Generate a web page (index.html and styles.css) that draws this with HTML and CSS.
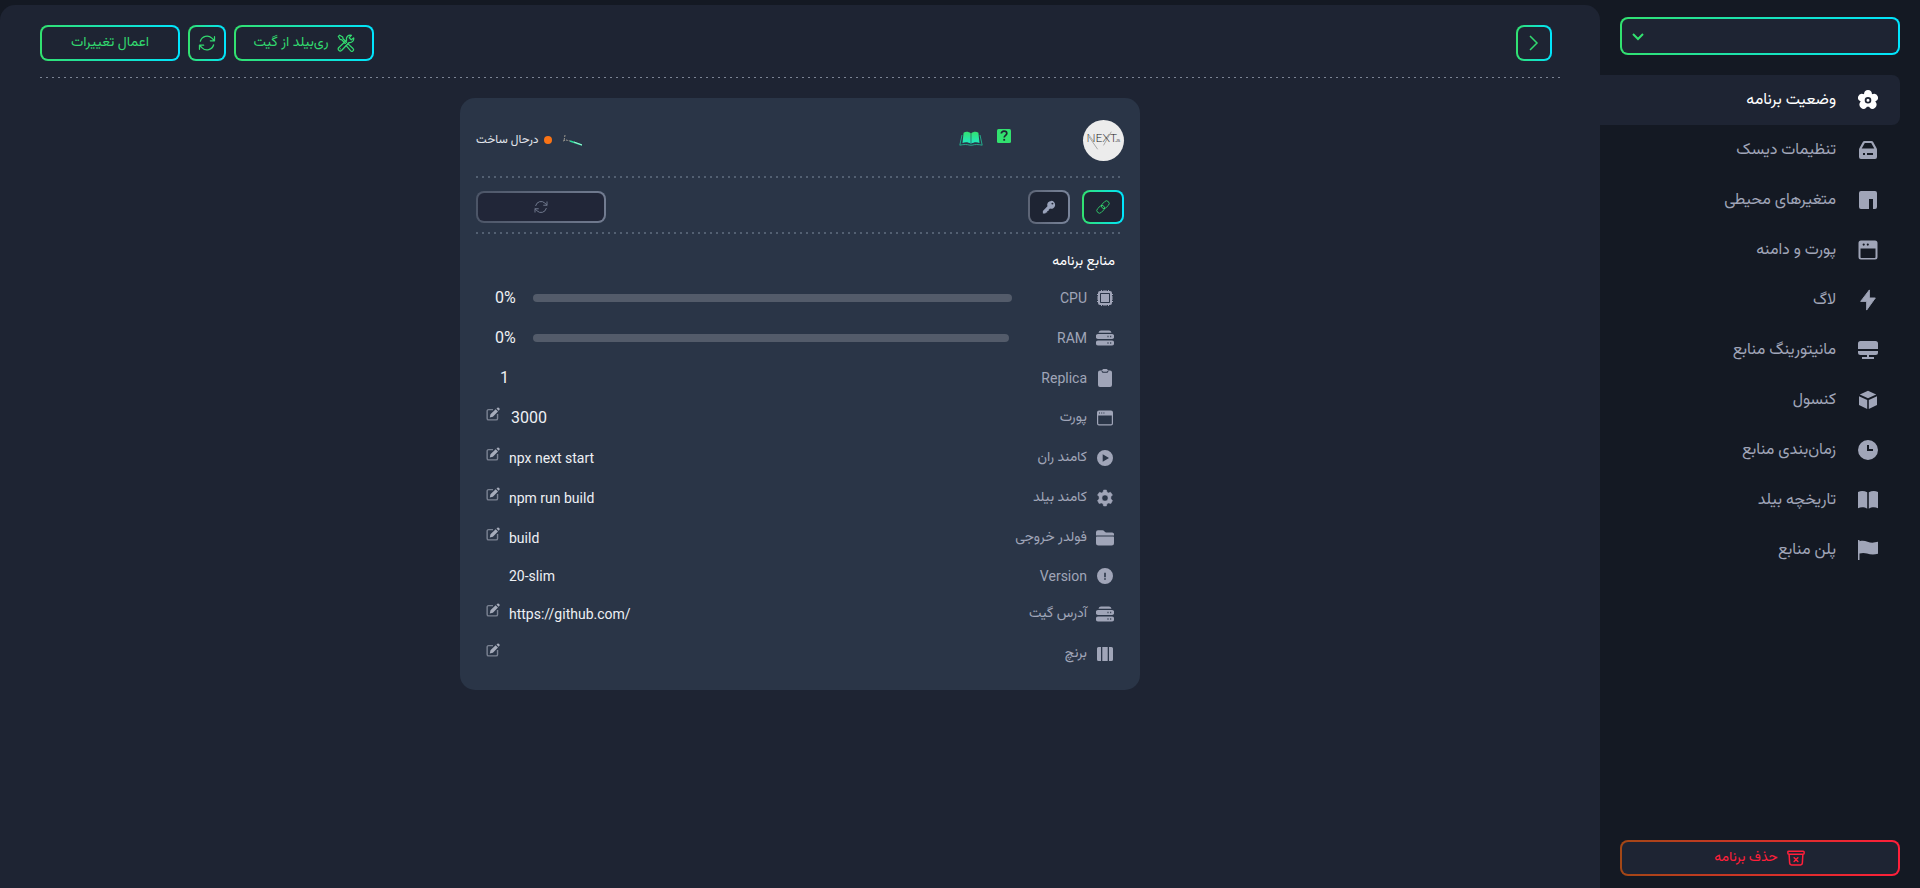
FILE: index.html
```html
<!DOCTYPE html>
<html lang="fa" dir="rtl">
<head>
<meta charset="utf-8">
<meta name="viewport" content="width=device-width, initial-scale=1">
<title>وضعیت برنامه</title>
<link rel="stylesheet" href="styles.css">
</head>
<body>
<svg class="sprite" aria-hidden="true">
  <symbol id="i-flower" viewBox="0 0 20 20"><path fill-rule="evenodd" d="M10 0a3.900 3.900 0 0 1 3.900 3.500l.1.800.8-.2a3.800 3.800 0 0 1 4.900 2.200 3.900 3.900 0 0 1-1.700 4.800l-.8.400.5.600a3.900 3.900 0 0 1-.6 5.600 3.900 3.900 0 0 1-5.500-.3l-.5-.7H8.900l-.5.700a3.900 3.900 0 0 1-5.500.3 3.900 3.900 0 0 1-.6-5.600l.5-.6-.8-.400A3.900 3.900 0 0 1 .3 6.300 3.800 3.800 0 0 1 5.200 4.100l.8.200.1-.8A3.900 3.900 0 0 1 10 0zm0 6.900a3.300 3.300 0 1 0 0 6.600 3.300 3.300 0 0 0 0-6.600zm0 1.800a1.500 1.500 0 1 1 0 3 1.500 1.500 0 0 1 0-3z"/></symbol>
  <symbol id="i-disk" viewBox="0 0 20 20"><path fill-rule="evenodd" d="M6.500 1h7a2 2 0 0 1 1.700 1l3.300 6c.4.700.5 1.200.5 2v7a2 2 0 0 1-2 2H3a2 2 0 0 1-2-2v-7c0-.8.1-1.300.5-2l3.300-6a2 2 0 0 1 1.700-1zm.3 2L3.700 8.600h12.600L13.200 3zM5 13v2h2v-2zm4 0v2h6v-2z"/></symbol>
  <symbol id="i-npm" viewBox="0 0 20 20"><path d="M3 1h14a2 2 0 0 1 2 2v14a2 2 0 0 1-2 2h-2V9h-4v10H3a2 2 0 0 1-2-2V3a2 2 0 0 1 2-2z"/></symbol>
  <symbol id="i-window" viewBox="0 0 20 20"><path fill-rule="evenodd" d="M3 .5h14a2.500 2.500 0 0 1 2.500 2.500v14a2.500 2.500 0 0 1-2.500 2.500H3A2.500 2.500 0 0 1 .5 17V3A2.500 2.500 0 0 1 3 .5zM2.500 8.500V17c0 .6.300 1 1 1h13c.7 0 1-.4 1-1V8.500zM5.700 3.500a1.100 1.100 0 1 0 0 2.200 1.100 1.100 0 0 0 0-2.200zm4.100 0a1.100 1.100 0 1 0 0 2.200 1.100 1.100 0 0 0 0-2.200z"/></symbol>
  <symbol id="i-bolt" viewBox="0 0 20 24"><path d="M11.500 1 2 13.500h6.500V23L18 9.800h-6.500z" stroke="currentColor" stroke-linejoin="round"/></symbol>
  <symbol id="i-monitor" viewBox="0 0 20 20"><path d="M2.500 1h15A2.500 2.500 0 0 1 20 3.500V9H0V3.500A2.500 2.500 0 0 1 2.500 1zM0 11h20v1.500a2.500 2.500 0 0 1-2.500 2.500H11v2h5v2H4v-2h5v-2H2.500A2.500 2.500 0 0 1 0 12.500z"/></symbol>
  <symbol id="i-cube" viewBox="0 0 20 20"><path d="M10 .8 18.200 4.600 10 8.300 1.800 4.600zM1 6.300l8.200 3.600V19L1 15zM19 6.300l-8.200 3.600V19L19 15z"/></symbol>
  <symbol id="i-clock" viewBox="0 0 20 20"><path fill-rule="evenodd" d="M10 0a10 10 0 1 1 0 20 10 10 0 0 1 0-20zM9 5v6h6V9h-4V5z"/></symbol>
  <symbol id="i-book" viewBox="0 0 20 20"><path d="M0 2c3-1.600 6.300-1.300 9.200.3v16.400C6.500 17 3 16.800 0 18.200zM20 2c-3-1.600-6.300-1.300-9.200.3v16.400c2.700-1.700 6.200-1.900 9.200-.5z"/></symbol>
  <symbol id="i-flag" viewBox="0 0 20 20"><path d="M0 0h1.500v1.300c3-.9 5.500-.4 8 .5 3.500 1.200 6.500 1 10.500 0v12c-4 1.200-7.500 1-11-.3-2.500-.8-5-.8-7.500 0V20H0z"/></symbol>
  <symbol id="i-refresh" viewBox="0 0 24 24"><path fill="none" stroke="currentColor" stroke-width="1.500" stroke-linecap="round" stroke-linejoin="round" d="M16.023 9.348h4.992V4.356M2.985 19.644v-4.992h4.992m-4.993 0 3.181 3.183a8.250 8.250 0 0 0 13.803-3.700M4.031 9.865a8.250 8.250 0 0 1 13.803-3.700l3.181 3.182"/></symbol>
  <symbol id="i-archive" viewBox="0 0 24 24"><path fill="none" stroke="currentColor" stroke-width="1.800" stroke-linecap="round" stroke-linejoin="round" d="m20.250 7.500-.625 10.632a2.250 2.250 0 0 1-2.247 2.118H6.622a2.250 2.250 0 0 1-2.247-2.118L3.750 7.500m6 4.125 4.500 4.500m0-4.500-4.500 4.500M3.375 7.500h17.250c.621 0 1.125-.504 1.125-1.125v-1.500c0-.621-.504-1.125-1.125-1.125H3.375c-.621 0-1.125.504-1.125 1.125v1.500c0 .621.504 1.125 1.125 1.125z"/></symbol>
  <symbol id="i-tools" viewBox="0 0 20 20"><g fill="none" stroke="currentColor" stroke-width="1.400" stroke-linejoin="round" stroke-linecap="round"><path d="M1.500 2.800 3 1.300l3.300 2 .4 1.900 4 4M1.500 2.800l2 3.300 1.900.4 3.800 4M12.300 11l5.500 5.200a1.700 1.700 0 0 1-2.500 2.500L10.200 13"/><path d="m18.500 4.300-2.600 2.200-2.300-2.400L16 1.400a4.300 4.300 0 0 0-5.300 5.500l-8.900 8.300a2.300 2.300 0 0 0 3.200 3.200l8.500-8.900a4.300 4.300 0 0 0 5-5.200zM3.600 16.500h.1"/></g></symbol>
  <symbol id="i-next" viewBox="0 0 20 20"><path fill="none" stroke="currentColor" stroke-width="1.500" d="m6 3 7 7-7 7"/></symbol>
  <symbol id="i-link" viewBox="0 0 24 24"><g fill="none" stroke="currentColor" stroke-width="1.400" transform="rotate(-45 12 12)"><rect x="-1" y="7.500" width="15" height="9" rx="4.500"/><rect x="10" y="7.500" width="15" height="9" rx="4.500"/></g></symbol>
  <symbol id="i-key" viewBox="0 0 16 16"><path fill-rule="evenodd" d="M10.500 1a4.500 4.500 0 1 1-1.300 8.800L7.500 11.300V12.700H6v1.500H4.500L3.800 15.400H1V12.500l5.200-5.400A4.600 4.600 0 0 1 10.500 1zm1.400 2a1.100 1.100 0 1 0 0 2.200 1.100 1.100 0 0 0 0-2.200z"/></symbol>
  <symbol id="i-cpu" viewBox="0 0 18 18"><path fill-rule="evenodd" d="M4 2h1V1h1v1h1.500V1h1v1h1V1h1v1H12V1h1v1h1a2 2 0 0 1 2 2v1h1v1h-1v1.500h1v1h-1v1h1v1h-1V12h1v1h-1v1a2 2 0 0 1-2 2h-1v1h-1v-1h-1.500v1h-1v-1h-1v1h-1v-1H6v1H5v-1H4a2 2 0 0 1-2-2v-1H1v-1h1v-1.500H1v-1h1v-1H1v-1h1V6H1V5h1V4a2 2 0 0 1 2-2zm.700 2c-.4 0-.7.300-.7.700v8.600c0 .4.300.7.700.7h8.600c.4 0 .7-.3.700-.7V4.700c0-.4-.3-.7-.7-.7zM5 5h8v8H5z"/></symbol>
  <symbol id="i-server" viewBox="0 0 18 18"><path fill-rule="evenodd" d="M5 1.500h8c1.300 0 2 .8 2.500 2.300h-13C3 2.300 3.700 1.500 5 1.500zM2.300 5h13.400a2.300 2.300 0 0 1 0 5H2.300a2.300 2.300 0 0 1 0-5zm9.200 1.800v1.400h1V6.800zm2.700 0v1.400h1V6.800zM2.300 11.500h13.400a2.300 2.300 0 0 1 0 5H2.300a2.300 2.300 0 0 1 0-5zm9.200 1.800v1.400h1v-1.400zm2.700 0v1.400h1v-1.400z"/></symbol>
  <symbol id="i-clip" viewBox="0 0 18 18"><path fill-rule="evenodd" d="M6 1.500C6.300.5 7 0 8 0h2c1 0 1.700.5 2 1.500h2a2 2 0 0 1 2 2V16a2 2 0 0 1-2 2H4a2 2 0 0 1-2-2V3.500a2 2 0 0 1 2-2zM5.500 2c.3 1.300 1 1.800 2 1.800h3c1 0 1.700-.5 2-1.800l-.8-.2c-.2.700-.7 1-1.400 1H7.700c-.7 0-1.200-.3-1.400-1z"/></symbol>
  <symbol id="i-browser" viewBox="0 0 18 18"><path fill-rule="evenodd" d="M3 1.500h12a2 2 0 0 1 2 2v11a2 2 0 0 1-2 2H3a2 2 0 0 1-2-2v-11a2 2 0 0 1 2-2zM2.200 6.500v7.800c0 .6.400 1 1 1h11.600c.6 0 1-.4 1-1V6.500zM3 3.500v1h1v-1zm2.200 0v1h1v-1zm2.200 0v1h1v-1z"/></symbol>
  <symbol id="i-play" viewBox="0 0 18 18"><path fill-rule="evenodd" d="M9 1a8 8 0 1 1 0 16A8 8 0 0 1 9 1zM6.700 5.200v7.600L13 9z"/></symbol>
  <symbol id="i-gear" viewBox="0 0 18 18"><path fill-rule="evenodd" d="M7.600 1h2.800l.5 2 1.500.9 2.100-.7L16.500 6l-1.600 1.700v2.200l1.600 1.700-1.600 3-2.300-.6-1.600.8-.6 2.200H7.600L7 14.800l-1.600-.8-2.300.6-1.600-3L3.100 10V7.700L1.500 6l2-2.800 2.100.7L7.100 3zM9 5.900a3.100 3.100 0 1 0 0 6.200 3.100 3.100 0 0 0 0-6.200z" stroke="currentColor" stroke-width=".5" stroke-linejoin="round"/></symbol>
  <symbol id="i-folder" viewBox="0 0 18 18"><path d="M2 1.300h4.500c1.500 0 2.200 2.200 3.500 2.200h6a2 2 0 0 1 2 2.500v.5H0V3.300a2 2 0 0 1 2-2zM0 8.500c0-.6.400-1 1-1h16c.6 0 1 .4 1 1V14a2.500 2.500 0 0 1-2.500 2.500h-13A2.500 2.500 0 0 1 0 14z"/></symbol>
  <symbol id="i-alert" viewBox="0 0 18 18"><path fill-rule="evenodd" d="M9 1a8 8 0 1 1 0 16A8 8 0 0 1 9 1zm-.8 4.800v4.500h1.600V5.800zm0 5.400v1.500h1.600v-1.500z"/></symbol>
  <symbol id="i-columns" viewBox="0 0 18 18"><path d="M2.500 2H5v14H2.500A1.500 1.500 0 0 1 1 14.500v-11A1.500 1.500 0 0 1 2.500 2zM6.300 2h5.400v14H6.300zM13 2h2.500A1.500 1.500 0 0 1 17 3.500v11a1.500 1.500 0 0 1-1.500 1.500H13z"/></symbol>
  <symbol id="i-edit" viewBox="0 0 16 16"><path fill="none" stroke="currentColor" stroke-width="1.600" opacity=".65" d="M8 3H3a1.700 1.700 0 0 0-1.700 1.700v8.300A1.700 1.700 0 0 0 3 14.700h8.500a1.700 1.700 0 0 0 1.700-1.700V8"/><path d="M4.300 12.100 5.100 8.400 11 2.500 13.700 5.200 7.900 11.100zM12 1.800l1-1a1.200 1.200 0 0 1 1.600 0l.8.800a1.200 1.200 0 0 1 0 1.600l-1 1z"/></symbol>
</svg>

<div class="app">
  <aside class="sidebar">
    <div class="picker ring">
      <select class="picker-select" aria-label="انتخاب برنامه"><option label=" "></option></select>
      <svg class="picker-arrow" viewBox="0 0 12 8" aria-hidden="true"><path d="m1 1 5 5 5-5"/></svg>
    </div>
    <nav class="nav">
      <a class="nav-item active" href="#"><svg class="nav-icon"><use href="#i-flower"/></svg>وضعیت برنامه</a>
      <a class="nav-item" href="#"><svg class="nav-icon"><use href="#i-disk"/></svg>تنظیمات دیسک</a>
      <a class="nav-item" href="#"><svg class="nav-icon"><use href="#i-npm"/></svg>متغیرهای محیطی</a>
      <a class="nav-item" href="#"><svg class="nav-icon"><use href="#i-window"/></svg>پورت و دامنه</a>
      <a class="nav-item" href="#"><svg class="nav-icon"><use href="#i-bolt"/></svg>لاگ</a>
      <a class="nav-item" href="#"><svg class="nav-icon"><use href="#i-monitor"/></svg>مانیتورینگ منابع</a>
      <a class="nav-item" href="#"><svg class="nav-icon"><use href="#i-cube"/></svg>کنسول</a>
      <a class="nav-item" href="#"><svg class="nav-icon"><use href="#i-clock"/></svg>زمان‌بندی منابع</a>
      <a class="nav-item" href="#"><svg class="nav-icon"><use href="#i-book"/></svg>تاریخچه بیلد</a>
      <a class="nav-item" href="#"><svg class="nav-icon"><use href="#i-flag"/></svg>پلن منابع</a>
    </nav>
    <button class="btn ring danger" type="button"><svg class="icon-20"><use href="#i-archive"/></svg>حذف برنامه</button>
  </aside>

  <main class="main">
    <header class="toolbar">
      <button class="btn ring square" type="button" aria-label="بازگشت"><svg class="icon-20"><use href="#i-next"/></svg></button>
      <div class="toolbar-actions">
        <button class="btn ring wide" type="button"><svg class="icon-18"><use href="#i-tools"/></svg>ری‌بیلد از گیت</button>
        <button class="btn ring reload" type="button" aria-label="بارگذاری مجدد"><svg class="icon-20"><use href="#i-refresh"/></svg></button>
        <button class="btn ring wide" type="button">اعمال تغییرات</button>
      </div>
    </header>

    <section class="card">
      <div class="card-head">
        <div class="logo" dir="ltr"><span class="logo-text">NEXT</span><span class="logo-js">.JS</span>
          <svg class="logo-lines" viewBox="0 0 42 42" aria-hidden="true"><path d="m6 17 9 13M21 26l8-14"/></svg>
        </div>
        <div class="help">
          <svg class="help-q" viewBox="0 0 14 14" role="img" aria-label="راهنما"><rect width="14" height="14" rx="1.500" fill="#32e16f"/><path d="M4.300 4.600C4.300 3 5.500 2.200 7 2.200s2.800.9 2.800 2.300C9.800 6.300 7.200 6.400 7.200 8.500" fill="none" stroke="#1e2433" stroke-width="1.700"/><path d="M6.300 9.900h1.800v1.800H6.300z" fill="#1e2433"/></svg>
          <svg class="help-book" viewBox="0 0 24 16" role="img" aria-label="مستندات">
            <defs><linearGradient id="g-book" x2="0" y2="1"><stop stop-color="#32e16f"/><stop offset="1" stop-color="#22e8c5"/></linearGradient></defs>
            <path fill="url(#g-book)" d="M11.700 2.300C9.500.3 6.500.3 4.600 1.800L3.500 12c2.800-1.200 6-.9 8.200.8zM12.300 2.300c2.200-2 5.200-2 7.100-.5L20.500 12c-2.800-1.200-6-.9-8.200.8z"/>
            <path fill="none" stroke="#22c59b" stroke-width=".8" d="M3 4 .8 14.200c4-.9 7.200-.9 10.200 0h2c3-.9 6.200-.9 10.200 0L21 4"/>
          </svg>
        </div>
        <div class="status">
          <svg class="spark" viewBox="0 0 20 12" aria-hidden="true"><path d="m1 7 3-1 4 1M3 1 2 7" stroke="#9a978f" stroke-dasharray="2 1"/><path d="m8 7 12 4" stroke="#2fdc9b" stroke-width="1.500"/><path d="m12 8 8 3" stroke="#c9ffee" stroke-width=".7"/></svg>
          <span class="dot"></span>درحال ساخت
        </div>
      </div>
      <div class="card-tools">
        <button class="btn ring tool" type="button" aria-label="پیوند"><svg class="icon-14"><use href="#i-link"/></svg></button>
        <button class="btn ring tool muted" type="button" aria-label="کلید"><svg class="icon-14"><use href="#i-key"/></svg></button>
        <button class="btn ring restart muted" type="button" aria-label="راه‌اندازی مجدد"><svg class="icon-16"><use href="#i-refresh"/></svg></button>
      </div>
      <h2 class="card-title">منابع برنامه</h2>
      <div class="rows">
        <div class="row"><svg class="icon-18"><use href="#i-cpu"/></svg><span class="label">CPU</span><div class="bar" role="progressbar" aria-label="CPU" aria-valuenow="0"></div><span class="percent" dir="ltr">0%</span></div>
        <div class="row"><svg class="icon-18"><use href="#i-server"/></svg><span class="label">RAM</span><div class="bar" role="progressbar" aria-label="RAM" aria-valuenow="0"></div><span class="percent" dir="ltr">0%</span></div>
        <div class="row"><svg class="icon-18"><use href="#i-clip"/></svg><span class="label">Replica</span><span class="count">1</span></div>
        <div class="row"><svg class="icon-18"><use href="#i-browser"/></svg><span class="label">پورت</span><span class="value number" dir="ltr">3000</span><button class="edit" type="button" aria-label="ویرایش پورت"><svg class="icon-14"><use href="#i-edit"/></svg></button></div>
        <div class="row"><svg class="icon-18"><use href="#i-play"/></svg><span class="label">کامند ران</span><span class="value" dir="ltr">npx next start</span><button class="edit" type="button" aria-label="ویرایش کامند ران"><svg class="icon-14"><use href="#i-edit"/></svg></button></div>
        <div class="row"><svg class="icon-18"><use href="#i-gear"/></svg><span class="label">کامند بیلد</span><span class="value" dir="ltr">npm run build</span><button class="edit" type="button" aria-label="ویرایش کامند بیلد"><svg class="icon-14"><use href="#i-edit"/></svg></button></div>
        <div class="row"><svg class="icon-18"><use href="#i-folder"/></svg><span class="label">فولدر خروجی</span><span class="value" dir="ltr">build</span><button class="edit" type="button" aria-label="ویرایش فولدر خروجی"><svg class="icon-14"><use href="#i-edit"/></svg></button></div>
        <div class="row fixed"><svg class="icon-18"><use href="#i-alert"/></svg><span class="label">Version</span><span class="value" dir="ltr">20-slim</span></div>
        <div class="row"><svg class="icon-18"><use href="#i-server"/></svg><span class="label">آدرس گیت</span><span class="value" dir="ltr">https://github.com/</span><button class="edit" type="button" aria-label="ویرایش آدرس گیت"><svg class="icon-14"><use href="#i-edit"/></svg></button></div>
        <div class="row"><svg class="icon-18"><use href="#i-columns"/></svg><span class="label">برنچ</span><span class="value" dir="ltr"></span><button class="edit" type="button" aria-label="ویرایش برنچ"><svg class="icon-14"><use href="#i-edit"/></svg></button></div>
      </div>
    </section>
  </main>
</div>
</body>
</html>
```
FILE: styles.css
```css
:root {
  --bg: #141923;
  --panel: #1e2433;
  --card: #2a3547;
  --green: #32d96f;
  --muted: #a0a5b8;
  --from: #32e16f;
  --to: #00e5ff;
}

* { box-sizing: border-box; }

body {
  margin: 0;
  background: var(--bg);
  color: #fff;
  font-family: Roboto, Vazirmatn, "Noto Sans Arabic", sans-serif;
  font-size: 14px;
}

svg { flex: none; fill: currentColor; }
.sprite { position: absolute; width: 0; height: 0; }
.icon-14 { width: 14px; height: 14px; }
.icon-16 { width: 16px; height: 16px; }
.icon-18 { width: 18px; height: 18px; }
.icon-20 { width: 20px; height: 20px; }

.app { display: flex; min-height: 100vh; }

.sidebar {
  display: flex;
  flex-direction: column;
  width: 320px;
  padding: 17px 20px 12px;
}

/* Rounded outline with a horizontal gradient */
.ring {
  border: 2px solid transparent;
  border-radius: 8px;
  background:
    linear-gradient(var(--panel), var(--panel)) padding-box,
    linear-gradient(90deg, var(--from), var(--to)) border-box;
}

.picker { display: grid; align-items: center; height: 38px; }
.picker-select {
  grid-area: 1 / 1;
  width: 100%;
  height: 100%;
  border: 0;
  background: none;
  color: #fff;
  appearance: none;
  font: inherit;
}
.picker-arrow {
  grid-area: 1 / 1;
  justify-self: end;
  width: 12px;
  height: 8px;
  margin: 2px 0 0 10px;
  pointer-events: none;
  fill: none;
  stroke: var(--from);
  stroke-width: 2;
}

.nav { flex: 1; margin: 20px 0 0 -20px; }
.nav-item {
  display: flex;
  align-items: center;
  gap: 22px;
  height: 50px;
  padding: 0 22px;
  color: var(--muted);
  font-size: 16px;
  text-decoration: none;
}
.nav-item.active {
  background: var(--panel);
  border-radius: 0 8px 8px 0;
  color: #fff;
}
.nav-icon { width: 20px; height: 22px; }

.btn {
  display: flex;
  align-items: center;
  justify-content: center;
  gap: 8px;
  height: 36px;
  padding: 0;
  color: var(--green);
  font: inherit;
}
.danger { --from: #a34716; --to: #ff1f3a; color: #ff1f3a; }
.wide { width: 140px; }
.square { width: 36px; }
.reload { width: 38px; }
.tool { width: 42px; height: 34px; }
.muted { --from: #5c6475; --to: #7a859b; color: #9aa3bb; }
.restart { width: 130px; height: 32px; margin-right: auto; }
.restart.muted { --panel: #212638; --from: #4c5567; --to: #727c91; color: #6f788d; }

.main {
  flex: 1;
  margin-top: 5px;
  padding: 20px 40px;
  background: var(--panel);
  border-radius: 15px 15px 0 0;
}
.toolbar {
  display: flex;
  justify-content: space-between;
  padding: 0 8px 17px 0;
  background: repeating-linear-gradient(90deg, #7c8494 0 2px, transparent 2px 6px) bottom / 100% 1px no-repeat;
}
.toolbar-actions { display: flex; gap: 8px; }

.card {
  width: 100%;
  max-width: 680px;
  margin: 20px auto 0;
  padding: 0 16px 16px;
  background: var(--card);
  border-radius: 15px;
}
.card-head,
.card-tools {
  display: flex;
  align-items: center;
  background: repeating-linear-gradient(90deg, #536072 0 2px, transparent 2px 6px) bottom / 100% 2px no-repeat;
}
.card-head { height: 80px; padding-top: 4px; }
.card-tools { height: 56px; padding-top: 2px; gap: 12px; }

.logo {
  position: relative;
  display: grid;
  grid-template-columns: 28px 6px;
  place-content: center;
  width: 41px;
  height: 41px;
  border-radius: 50%;
  background: #ececec;
  color: #222;
}
.logo-text { font: 300 12px/14px Lato, sans-serif; }
.logo-js { font: 4px/19px Roboto, sans-serif; }
.logo-lines {
  position: absolute;
  inset: 0;
  fill: none;
  stroke: #888;
  stroke-width: .7;
}

.help { display: flex; gap: 14px; margin: 0 72px 4px 0; }
.help-q { width: 14px; height: 14px; }
.help-book { width: 24px; height: 16px; margin-top: 2px; }

.status {
  display: flex;
  align-items: center;
  gap: 5px;
  margin-right: auto;
  color: #e3e6ec;
  font-size: 12px;
}
.spark { width: 20px; height: 12px; margin-left: 5px; fill: none; }
.dot { width: 8px; height: 8px; border-radius: 50%; background: #f97316; }

.card-title {
  margin: 0;
  padding: 8px 9px 0;
  font-size: 14px;
  font-weight: 400;
  line-height: 36px;
}

.rows { padding: 0 10px; }
.row { display: flex; align-items: center; height: 40px; color: var(--muted); }
.row.fixed { height: 36px; }
.label { margin-right: 9px; }
.bar { flex: 1; height: 8px; margin-right: 48px; border-radius: 4px; background: #535b6a; }
.percent { width: 47px; padding: 0 0 2px 9px; color: #eef0f4; font-size: 16px; }
.count { margin: 0 auto 0 14px; padding-bottom: 2px; color: #eef0f4; font-size: 16px; }
.value { margin: 0 auto 0 9px; color: #eef0f4; }
.value.number { margin-left: 11px; padding-bottom: 2px; font-size: 16px; }
.fixed .value { margin-left: 23px; }
.edit {
  display: flex;
  margin-bottom: 8px;
  padding: 0;
  border: 0;
  background: none;
  color: #a6acbb;
}
```
